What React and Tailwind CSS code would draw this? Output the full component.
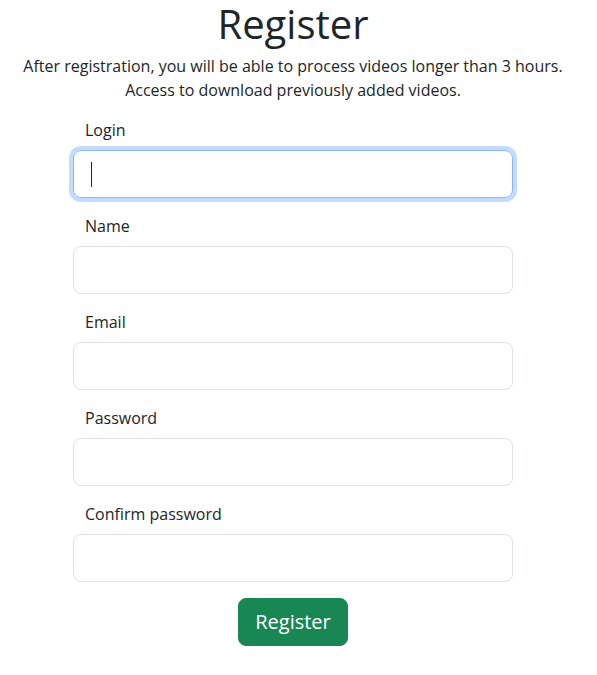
export default function App() {
  const fields = ["Login", "Name", "Email", "Password", "Confirm password"];
  return (
    <div className="w-[586px] bg-white text-[#212529]" style={{ fontFamily: '"Open Sans", "Noto Sans", sans-serif' }}>
      <h1 className="text-center text-[40px] leading-[48px] font-normal mb-[6px]">Register</h1>
      <p className="text-center text-[16px] leading-[24px]">
        After registration, you will be able to process videos longer than 3 hours.
        <br />
        Access to download previously added videos.
      </p>
      <div className="w-[440px] ml-[73px] mt-[16px] flex flex-col gap-4">
        {fields.map((f, i) => (
          <div key={f} className="flex flex-col">
            <label className="ml-3 mb-2 text-[16px] leading-[24px]">{f}</label>
            {i === 0 ? (
              <div className="h-[48px] rounded-lg border border-[#86b7fe] shadow-[0_0_0_4px_rgba(13,110,253,0.25)] flex items-center pl-4">
                <div className="w-[1px] h-[25px] bg-[#212529] ml-[1px]" />
              </div>
            ) : (
              <div className="h-[48px] rounded-lg border border-[#dee2e6]" />
            )}
          </div>
        ))}
      </div>
      <div className="flex justify-center mt-4 pl-[0px]">
        <button className="h-[48px] px-4 rounded-lg bg-[#198754] text-white text-[20px] leading-[30px] border border-[#198754]">
          Register
        </button>
      </div>
    </div>
  );
}
